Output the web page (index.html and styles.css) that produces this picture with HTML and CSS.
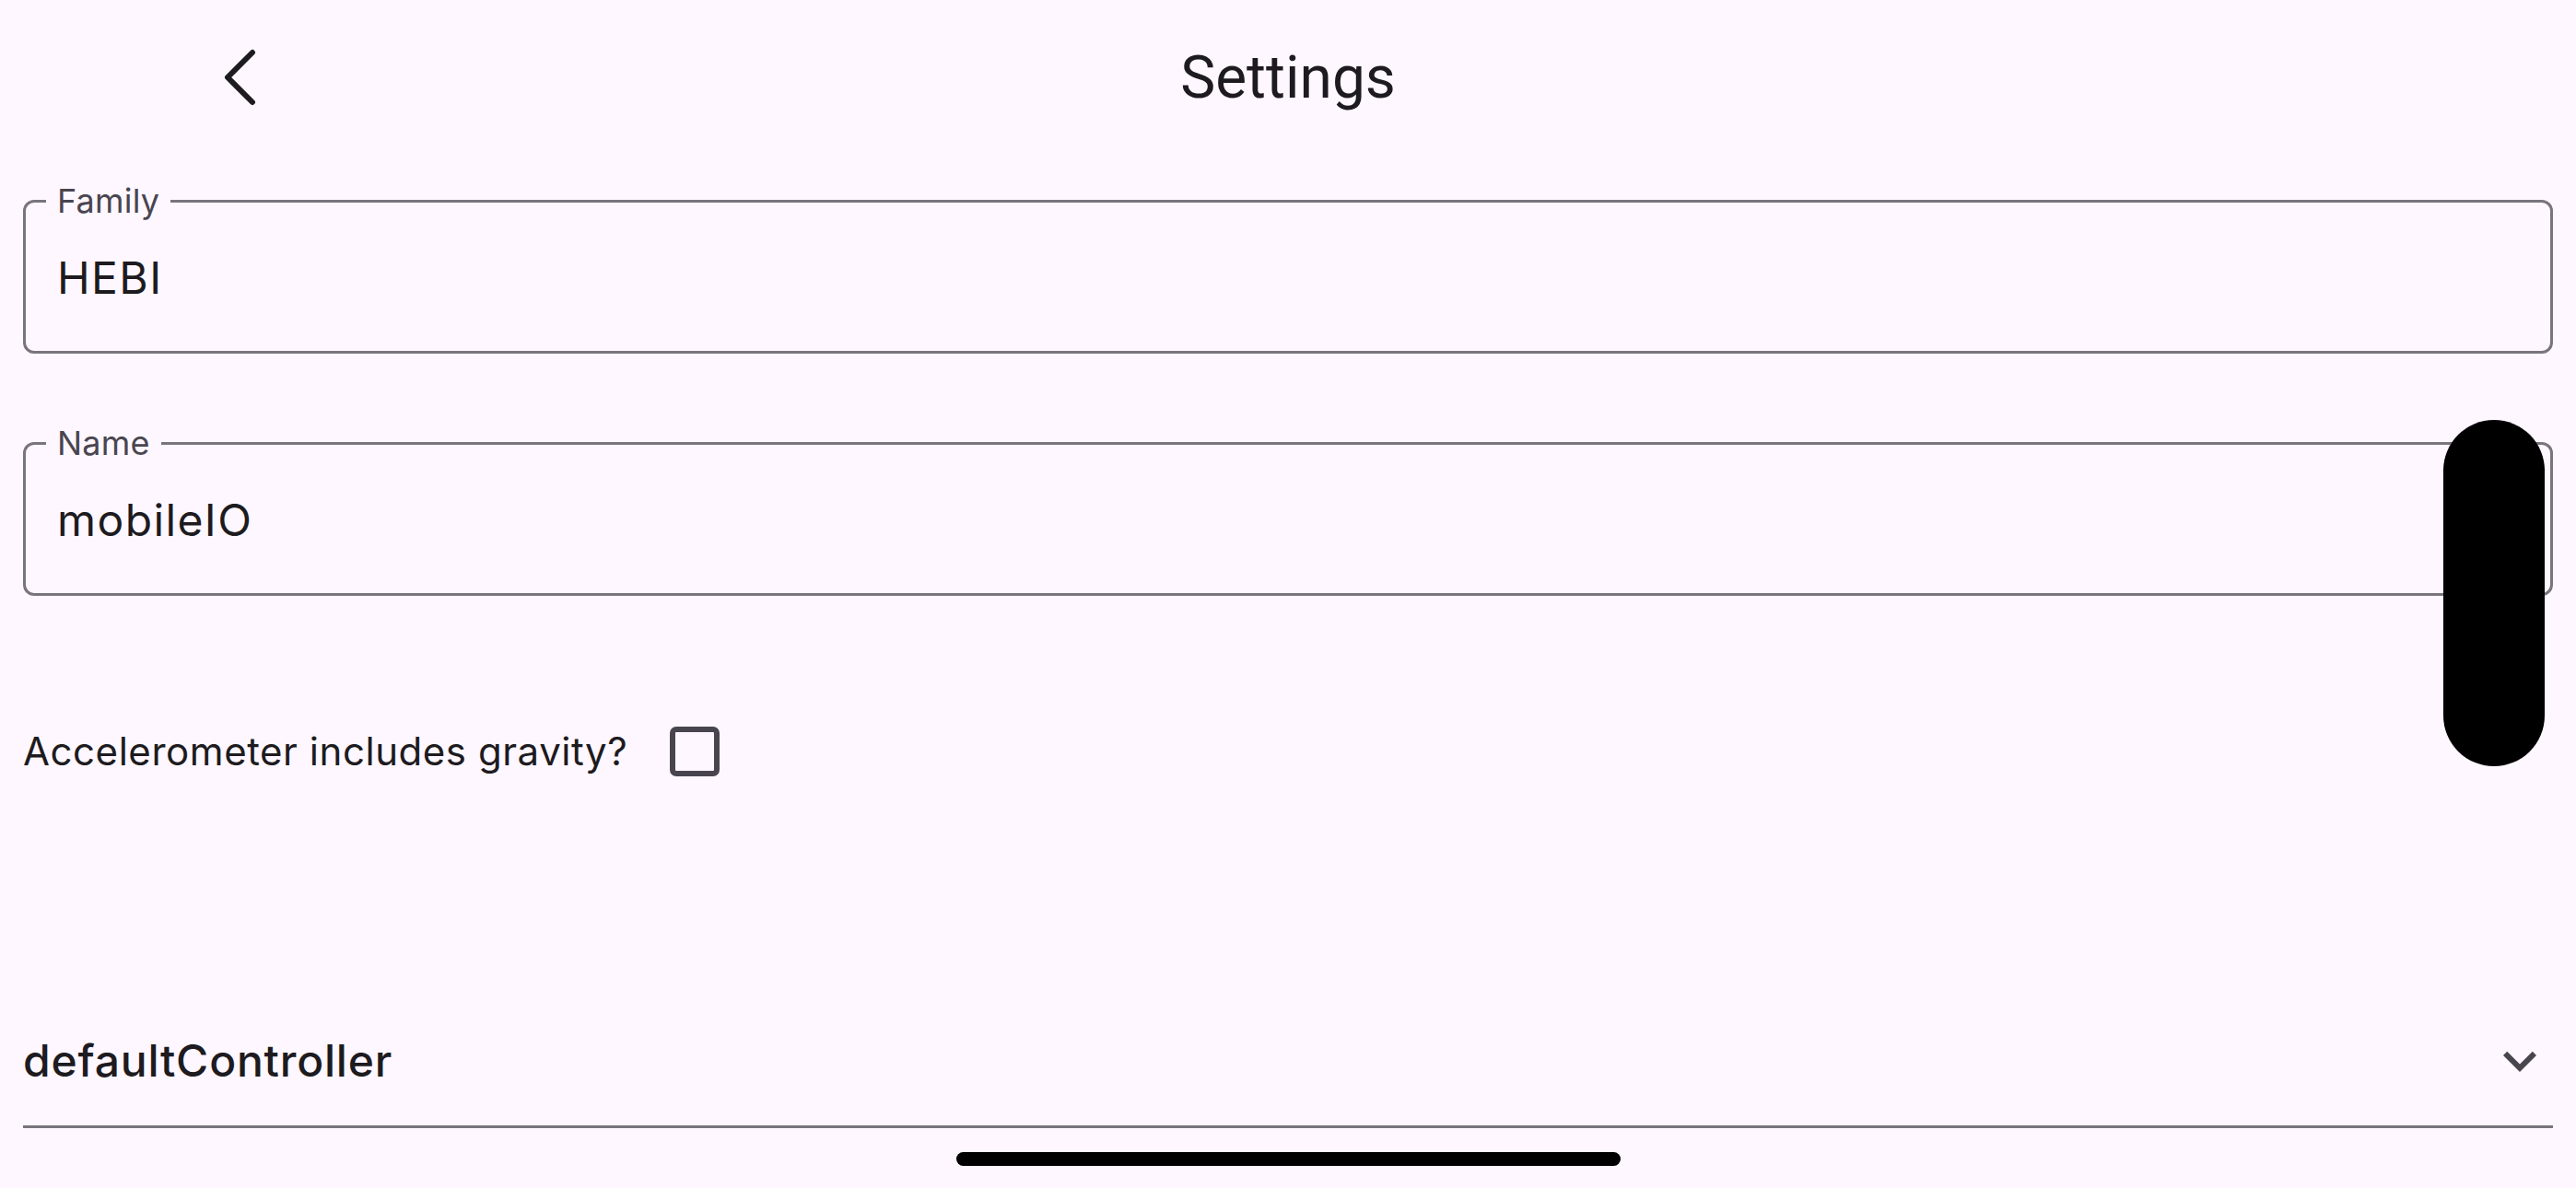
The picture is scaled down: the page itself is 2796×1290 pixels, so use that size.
FILE: index.html
```html
<!DOCTYPE html>
<html lang="en">
<head>
<meta charset="utf-8">
<title>Settings</title>
<link rel="stylesheet" href="styles.css">
</head>
<body>
<div class="screen">
  <header class="app-bar">
    <div class="leading">
      <button class="back-btn" aria-label="Back">
        <svg class="back-icon" viewBox="0 0 40 64" width="40" height="64" aria-hidden="true">
          <polyline points="33,5 6,32 33,59" fill="none" stroke="#1D1B20" stroke-width="6" stroke-linecap="round" stroke-linejoin="round"/>
        </svg>
      </button>
    </div>
    <h1 class="title">Settings</h1>
    <div class="trailing"></div>
  </header>

  <main class="content">
    <fieldset class="field">
      <legend class="field-label">Family</legend>
      <div class="field-value">HEBI</div>
    </fieldset>

    <fieldset class="field field-gap">
      <legend class="field-label">Name</legend>
      <div class="field-value">mobileIO</div>
    </fieldset>

    <div class="check-row">
      <span class="check-text">Accelerometer includes gravity?</span>
      <span class="checkbox" role="checkbox" aria-checked="false"></span>
    </div>

    <div class="expansion-tile">
      <span class="tile-title">defaultController</span>
      <svg class="expand-icon" viewBox="0 0 24 24" width="72" height="72" aria-hidden="true">
        <path d="M16.59 8.59L12 13.17 7.41 8.59 6 10l6 6 6-6z" fill="#49454F"/>
      </svg>
    </div>
  </main>

  <div class="scroll-thumb"></div>
  <div class="home-indicator"></div>
</div>
</body>
</html>
```

FILE: styles.css
```css
html, body {
  margin: 0;
  padding: 0;
}

body {
  background: #FEF7FF;
  font-family: "Inter", "Roboto", sans-serif;
  color: #1D1B20;
}

.screen {
  position: relative;
  width: 2796px;
  height: 1290px;
  overflow: hidden;
  background: #FEF7FF;
}

/* App bar */
.app-bar {
  display: grid;
  grid-template-columns: 1fr auto 1fr;
  align-items: center;
  height: 168px;
}

.leading {
  display: flex;
  align-items: center;
}

.back-btn {
  margin-left: 177px;
  width: 168px;
  height: 168px;
  display: flex;
  align-items: center;
  justify-content: center;
  padding: 0;
  border: 0;
  background: transparent;
}

.back-icon {
  display: block;
}

.title {
  margin: 0;
  padding-top: 2px;
  font-family: "Roboto", "Inter", sans-serif;
  font-weight: 400;
  font-size: 64px;
  line-height: 80px;
  color: #1D1B20;
}

/* Content */
.content {
  padding: 32px 25px 0;
  display: flex;
  flex-direction: column;
}

.field {
  margin: 0;
  border: 3px solid #79747E;
  border-radius: 12px;
  padding: 37px 0 50px 34px;
  min-width: 0;
}

.field-gap {
  margin-top: 79px;
}

.field-label {
  padding: 0 12px;
  margin-left: -12px;
  font-size: 36px;
  line-height: 36px;
  letter-spacing: 0.2px;
  color: #49454F;
}

.field-value {
  font-size: 48px;
  line-height: 58px;
  letter-spacing: 1.4px;
  color: #1D1B20;
}

/* Checkbox row */
.check-row {
  margin-top: 97px;
  height: 144px;
  display: flex;
  align-items: center;
  gap: 46px;
}

.check-text {
  font-size: 42px;
  line-height: 52px;
  letter-spacing: 0.55px;
  color: #1D1B20;
}

.checkbox {
  width: 54px;
  height: 54px;
  box-sizing: border-box;
  border: 6px solid #49454F;
  border-radius: 7px;
}

/* Expansion tile */
.expansion-tile {
  margin-top: 194px;
  height: 140px;
  display: flex;
  align-items: center;
  justify-content: space-between;
  border-bottom: 3px solid #79747E;
}

.tile-title {
  font-size: 48px;
  font-weight: 500;
  line-height: 58px;
  letter-spacing: 0.8px;
  color: #1D1B20;
}

.expand-icon {
  display: block;
}

/* Overlays */
.scroll-thumb {
  position: absolute;
  left: 2652px;
  top: 456px;
  width: 110px;
  height: 376px;
  border-radius: 55px;
  background: #000;
}

.home-indicator {
  position: absolute;
  left: 1038px;
  top: 1251px;
  width: 721px;
  height: 15px;
  border-radius: 8px;
  background: #000;
}
```
